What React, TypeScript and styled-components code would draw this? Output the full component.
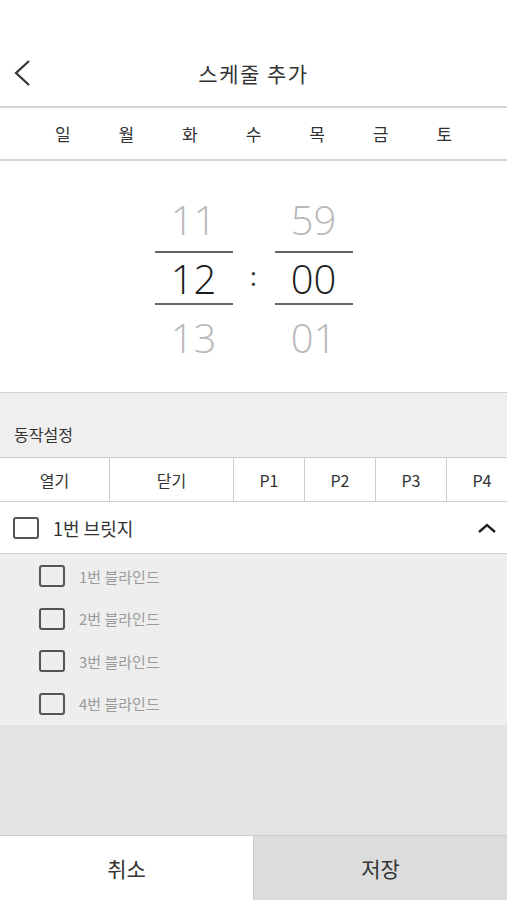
import React from "react";
import styled, { createGlobalStyle } from "styled-components";

const GlobalStyle = createGlobalStyle`
  html, body {
    margin: 0;
    padding: 0;
    background: #ffffff;
  }
  body {
    font-family: "Noto Sans CJK KR", "Noto Sans", sans-serif;
    color: #333333;
  }
`;

const Page = styled.div`
  width: 507px;
  height: 900px;
  display: flex;
  flex-direction: column;
  overflow: hidden;
  background: #ffffff;
`;

const Header = styled.div`
  height: 66px;
  margin-top: 40px;
  display: flex;
  align-items: center;
  justify-content: center;
  position: relative;
  border-bottom: 2px solid #d4d4d4;
`;

const BackButton = styled.button`
  position: absolute;
  left: 8px;
  top: 50%;
  transform: translateY(-50%);
  width: 28px;
  height: 36px;
  border: none;
  background: transparent;
  padding: 0;
  display: flex;
  align-items: center;
  justify-content: center;
`;

const Title = styled.h1`
  margin: 0;
  font-size: 21px;
  font-weight: 400;
  letter-spacing: 1.5px;
  color: #333333;
`;

const DayRow = styled.div`
  height: 51px;
  padding: 0 31px;
  display: grid;
  grid-template-columns: repeat(7, 1fr);
  align-items: center;
  border-bottom: 2px solid #d4d4d4;
`;

const Day = styled.span`
  text-align: center;
  font-size: 17px;
  color: #333333;
`;

const Picker = styled.div`
  padding: 26px 0 23px;
  display: flex;
  justify-content: center;
  align-items: center;
  border-bottom: 1px solid #d0d0d0;
`;

const PickerColumn = styled.div`
  width: 78px;
  display: flex;
  flex-direction: column;
`;

const PickerItem = styled.div<{ $active?: boolean }>`
  height: ${(p) => (p.$active ? "50px" : "64px")};
  display: flex;
  align-items: center;
  justify-content: center;
  font-family: "Open Sans", "Noto Sans", sans-serif;
  font-size: 40px;
  font-weight: 300;
  color: ${(p) => (p.$active ? "#1c1c1c" : "#b9b9b9")};
  border-top: ${(p) => (p.$active ? "2px solid #666" : "none")};
  border-bottom: ${(p) => (p.$active ? "2px solid #666" : "none")};
`;

const Colon = styled.span`
  width: 42px;
  text-align: center;
  font-family: "Open Sans", sans-serif;
  font-size: 26px;
  color: #333;
  margin-top: -4px;
`;

const Section = styled.div`
  flex: 1;
  display: flex;
  flex-direction: column;
  background: #e3e3e3;
`;

const SectionLabel = styled.div`
  height: 64px;
  background: #efefef;
  display: flex;
  align-items: flex-end;
  padding: 0 14px 11px;
  box-sizing: border-box;
  font-size: 16px;
  color: #333;
`;

const Tabs = styled.div`
  display: flex;
  height: 43px;
  border-top: 1px solid #cccccc;
  border-bottom: 1px solid #cccccc;
  background: #ffffff;
  overflow: hidden;
`;

const Tab = styled.div<{ $w: number }>`
  flex: 0 0 ${(p) => p.$w}px;
  display: flex;
  align-items: center;
  justify-content: center;
  font-size: 16px;
  color: #333;
  border-right: 1px solid #cccccc;
  box-sizing: border-box;
`;

const GroupRow = styled.div`
  height: 51px;
  display: flex;
  align-items: center;
  padding: 0 10px 0 13px;
  background: #ffffff;
  border-bottom: 1px solid #cccccc;
`;

const Check = styled.span<{ $indent?: boolean }>`
  width: 26px;
  height: 22px;
  box-sizing: border-box;
  border: 2px solid #555555;
  border-radius: 3px;
  margin-left: ${(p) => (p.$indent ? "26px" : "0")};
  flex: none;
`;

const GroupName = styled.span`
  margin-left: 14px;
  font-size: 18px;
  color: #333;
  flex: 1;
`;

const SubList = styled.div`
  background: #eeeeee;
  padding: 1px 0 0 13px;
`;

const SubRow = styled.div`
  height: 42.5px;
  display: flex;
  align-items: center;
`;

const SubName = styled.span`
  margin-left: 14px;
  font-size: 15px;
  color: #9a9a9a;
`;

const Footer = styled.div`
  height: 64px;
  display: grid;
  grid-template-columns: 253px 1fr;
  border-top: 1px solid #cfcfcf;
`;

const FooterButton = styled.button<{ $primary?: boolean }>`
  border: none;
  border-left: ${(p) => (p.$primary ? "1px solid #cfcfcf" : "none")};
  background: ${(p) => (p.$primary ? "#dcdcdc" : "#ffffff")};
  font-family: "Noto Sans CJK KR", sans-serif;
  font-size: 21px;
  color: #333;
`;

const days = ["일", "월", "화", "수", "목", "금", "토"];
const tabs: [string, number][] = [
  ["열기", 110],
  ["닫기", 124],
  ["P1", 71],
  ["P2", 71],
  ["P3", 71],
  ["P4", 71],
];
const blinds = ["1번 블라인드", "2번 블라인드", "3번 블라인드", "4번 블라인드"];

const App = () => {
  return (
    <Page>
      <GlobalStyle />
      <Header>
        <BackButton aria-label="back">
          <svg width="20" height="28" viewBox="0 0 20 28">
            <path d="M17 2 L4 14 L17 26" fill="none" stroke="#333" strokeWidth="2.2" />
          </svg>
        </BackButton>
        <Title>스케줄 추가</Title>
      </Header>
      <DayRow>
        {days.map((d) => (
          <Day key={d}>{d}</Day>
        ))}
      </DayRow>
      <Picker>
        <PickerColumn>
          <PickerItem>11</PickerItem>
          <PickerItem $active>12</PickerItem>
          <PickerItem>13</PickerItem>
        </PickerColumn>
        <Colon>:</Colon>
        <PickerColumn>
          <PickerItem>59</PickerItem>
          <PickerItem $active>00</PickerItem>
          <PickerItem>01</PickerItem>
        </PickerColumn>
      </Picker>
      <Section>
        <SectionLabel>동작설정</SectionLabel>
        <Tabs>
          {tabs.map(([t, w]) => (
            <Tab key={t} $w={w}>
              {t}
            </Tab>
          ))}
        </Tabs>
        <GroupRow>
          <Check />
          <GroupName>1번 브릿지</GroupName>
          <svg width="20" height="12" viewBox="0 0 20 12">
            <path d="M2 10 L10 3 L18 10" fill="none" stroke="#222" strokeWidth="2.4" />
          </svg>
        </GroupRow>
        <SubList>
          {blinds.map((b) => (
            <SubRow key={b}>
              <Check $indent />
              <SubName>{b}</SubName>
            </SubRow>
          ))}
        </SubList>
      </Section>
      <Footer>
        <FooterButton>취소</FooterButton>
        <FooterButton $primary>저장</FooterButton>
      </Footer>
    </Page>
  );
};

export default App;
